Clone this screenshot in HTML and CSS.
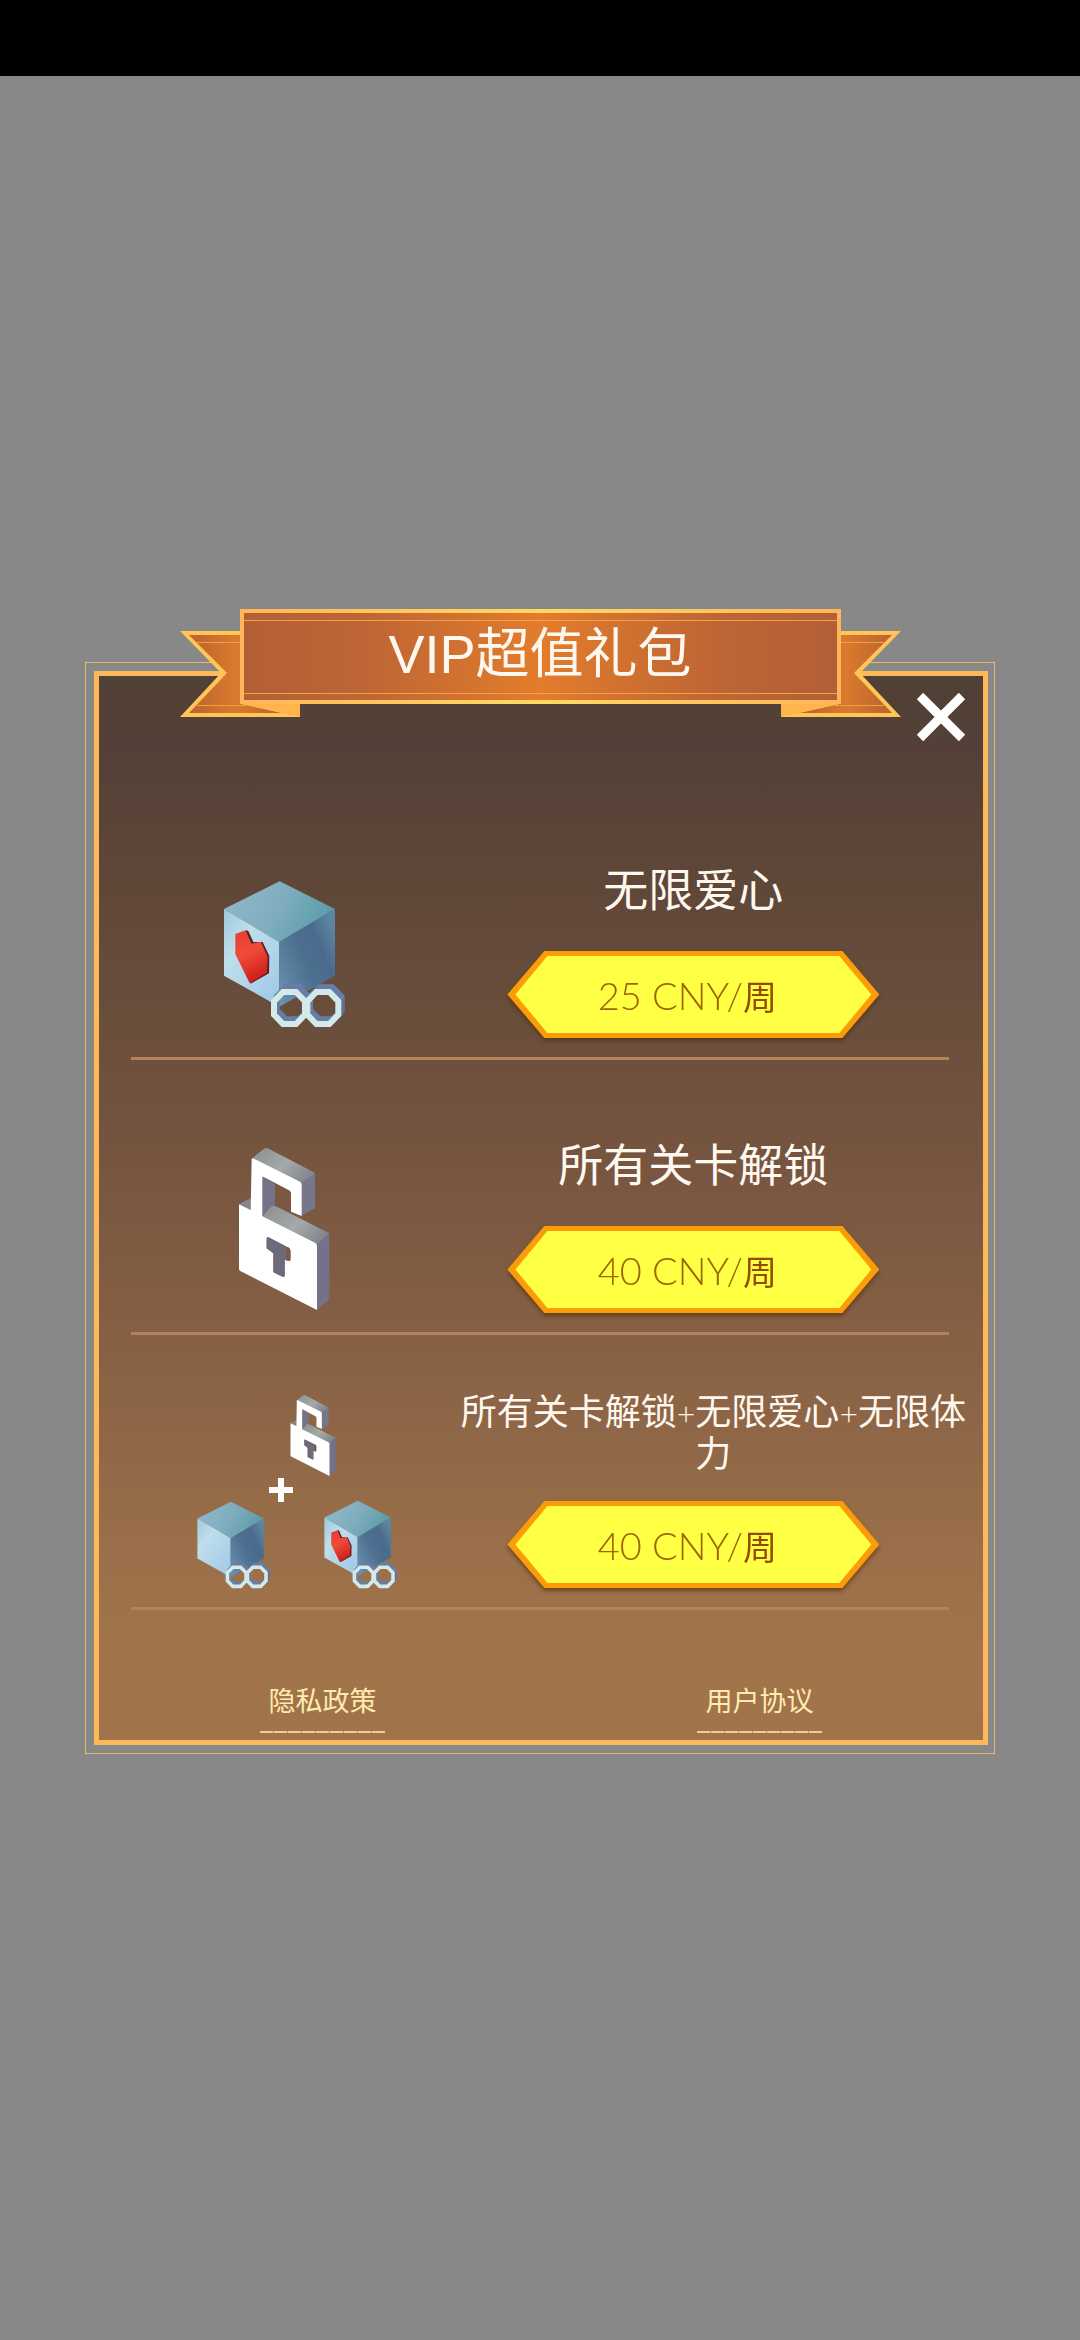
FILE: index.html
```html
<!DOCTYPE html>
<html lang="zh-CN">
<head>
  <meta charset="UTF-8" />
  <meta name="viewport" content="width=device-width, initial-scale=1.0" />
  <title>VIP超值礼包</title>
  <link rel="stylesheet" href="styles.css">
</head>
<body>
  <svg class="sprite" width="0" height="0" aria-hidden="true">
    <defs>
      <linearGradient id="cubeTop" x1="0" y1="0.3" x2="1" y2="0.6">
        <stop offset="0" stop-color="#8fb8cb"/><stop offset="0.5" stop-color="#7fadbd"/><stop offset="1" stop-color="#569aa6"/>
      </linearGradient>
      <linearGradient id="cubeLeft" x1="0" y1="0" x2="0.8" y2="1">
        <stop offset="0" stop-color="#9cc9dc"/><stop offset="0.35" stop-color="#bfdeea"/><stop offset="1" stop-color="#a2cbe8"/>
      </linearGradient>
      <linearGradient id="cubeRight" x1="0" y1="1" x2="1" y2="0.2">
        <stop offset="0" stop-color="#6e95b3"/><stop offset="0.5" stop-color="#4c7090"/><stop offset="0.75" stop-color="#4a6a8d"/><stop offset="1" stop-color="#5c87a2"/>
      </linearGradient>
      <linearGradient id="heartRed" x1="0" y1="0" x2="0.3" y2="1">
        <stop offset="0" stop-color="#e5402f"/><stop offset="0.5" stop-color="#f04a39"/><stop offset="1" stop-color="#cf211d"/>
      </linearGradient>
      <linearGradient id="lockTop" x1="0" y1="0" x2="1" y2="0.6">
        <stop offset="0" stop-color="#8b8f91"/><stop offset="0.6" stop-color="#a4a9aa"/><stop offset="1" stop-color="#85878e"/>
      </linearGradient>
      <linearGradient id="ribbonFill">
        <stop offset="0" stop-color="#b35f36"/><stop offset="0.2" stop-color="#bd6534"/><stop offset="0.5" stop-color="#e37c2c"/><stop offset="0.8" stop-color="#bd6534"/><stop offset="1" stop-color="#b35f36"/>
      </linearGradient>
      <linearGradient id="ribbonGold">
        <stop offset="0" stop-color="#ffb55a"/><stop offset="0.5" stop-color="#ffd964"/><stop offset="1" stop-color="#ffb55a"/>
      </linearGradient>
      <linearGradient id="tailFill">
        <stop offset="0" stop-color="#bb6331"/><stop offset="0.5" stop-color="#da7a2c"/><stop offset="1" stop-color="#b8632f"/>
      </linearGradient>

      <symbol id="cube" viewBox="0 0 510 570">
        <path fill="url(#cubeTop)" d="M239 64 405 147 238 246 72 147z"/>
        <path fill="url(#cubeLeft)" d="M72 147 238 246V440L72 347z"/>
        <path fill="url(#cubeRight)" d="M238 246 405 147V347L238 440z"/>
      </symbol>
      <symbol id="heart" viewBox="0 0 510 570">
        <path fill="#5b1d27" d="M137 210 145 213 160 246 188 246 208 288 207 340 152 371z"/>
        <path fill="url(#heartRed)" d="M106 222 137 211 154 251 182 245 203 290 201 338 149 370 106 282z"/>
      </symbol>
      <symbol id="infinity" viewBox="0 0 510 570">
        <g fill="none" stroke-width="18">
          <path stroke="#667ea6" d="M325 410V450L297 478H258L230 450V410L258 382H297zM425 410V450L397 478H358L330 450V410L358 382H397z"/>
          <path stroke="#5a7099" d="M422 418V458L396 484"/>
          <path stroke="#d3e9ea" d="M315 424V464L288 492H249L222 464V424L249 396H288zM415 424V464L388 492H349L322 464V424L349 396H388z"/>
        </g>
      </symbol>
      <symbol id="lock" viewBox="0 0 390 600">
        <path fill="#85858d" d="M57 223 92 204V240z"/>
        <path fill="url(#lockTop)" d="M95 86 132 56Q138 52 146 56L280 126Q286 129 285 136L243 160z"/>
        <path fill="#77778b" d="M243 160 285 130V235L243 258z"/>
        <path fill="#73738a" d="M127 140 165 162V225L127 262z"/>
        <path fill="url(#lockTop)" d="M127 260 155 229Q160 225 168 229L328 310 290 345z"/>
        <path fill="#73728a" d="M290 345 328 310V508L290 540z"/>
        <path fill="#fff" fill-rule="evenodd" d="M95 86Q97 83 101 86L240 155Q245 158 245 163V258L213 245V190Q213 184 207 181L131 141Q127 139 127 144V259L285 338Q291 341 291 348V540L61 423Q57 421 57 416V223L92 240zM140 326V355L160 370V422Q160 427 165 429L188 440Q194 442 194 436V389L206 393Q211 394 211 389V362Q211 356 206 353L145 322Q140 320 140 326z"/>
        <path fill="#6d6a7c" d="M140 326Q140 320 145 322L206 353Q211 356 211 362V389Q211 394 206 393L194 389V436Q194 442 188 440L165 429Q160 427 160 422V370L140 355z"/>
        <path fill="#87573b" d="M199 351 206 353Q211 356 211 362V389Q211 394 206 393L199 382z"/>
      </symbol>
    </defs>
  </svg>

  <div class="status-bar"></div>

  <main class="screen">
    <section class="dialog" aria-labelledby="dialogTitle">
      <header class="ribbon">
        <svg class="ribbon-art" viewBox="0 0 721 109" aria-hidden="true">
          <g id="tail">
            <path fill="#ffc657" d="M0 22H62V95H120V108H0L41 64z"/>
            <path fill="url(#tailFill)" d="M9 26H62V95L102 104H9L47 64z"/>
            <path stroke="#f0a044" d="M17 33.5H60M17 96.5H66"/>
            <path fill="#ffb54c" d="M62 95H120V108L102 104z"/>
          </g>
          <use href="#tail" transform="matrix(-1 0 0 1 721 0)"/>
          <rect x="60" width="601" height="95" fill="url(#ribbonGold)"/>
          <rect x="64" y="4" width="593" height="87" fill="url(#ribbonFill)"/>
          <path stroke="#f6a044" d="M64 11.500H657M64 84.500H657"/>
        </svg>
        <h1 id="dialogTitle">VIP超值礼包</h1>
      </header>

      <button class="close" type="button" aria-label="关闭">
        <svg viewBox="0 0 50 50"><path d="M4 4 46 46M46 4 4 46" stroke="#fff" stroke-width="9"/></svg>
      </button>

      <div class="panel">
        <ul class="offers">
          <li class="offer">
            <svg class="offer-icon" viewBox="0 0 240 220" aria-hidden="true">
              <use href="#cube" x="36" y="30" width="170" height="190"/>
              <use href="#heart" x="36" y="30" width="170" height="190"/>
              <use href="#infinity" x="36" y="30" width="170" height="190"/>
            </svg>
            <div class="offer-info">
              <h2 class="offer-name">无限爱心</h2>
              <button class="buy" type="button"><span class="buy-edge"><span class="buy-face">25 CNY/<b>周</b></span></span></button>
            </div>
          </li>
          <li class="offer">
            <svg class="offer-icon" viewBox="0 0 240 220" aria-hidden="true">
              <use href="#lock" x="56" y="25" width="130" height="200"/>
            </svg>
            <div class="offer-info">
              <h2 class="offer-name">所有关卡解锁</h2>
              <button class="buy" type="button"><span class="buy-edge"><span class="buy-face">40 CNY/<b>周</b></span></span></button>
            </div>
          </li>
          <li class="offer">
            <svg class="offer-icon" viewBox="0 0 240 220" aria-hidden="true">
              <use href="#lock" x="117" y="6" width="65" height="100"/>
              <path d="M105 110H129M117 98V122" stroke="#fff" stroke-width="6"/>
              <use href="#cube" x="19" y="109" width="102" height="114"/>
              <use href="#infinity" x="19" y="108" width="102" height="114"/>
              <use href="#cube" x="146" y="108" width="102" height="114"/>
              <use href="#heart" x="146" y="108" width="102" height="114"/>
              <use href="#infinity" x="146" y="108" width="102" height="114"/>
            </svg>
            <div class="offer-info">
              <h2 class="offer-name bundle">所有关卡解锁<i>+</i>无限爱心<i>+</i>无限体<wbr>力</h2>
              <button class="buy" type="button"><span class="buy-edge"><span class="buy-face">40 CNY/<b>周</b></span></span></button>
            </div>
          </li>
        </ul>
        <footer class="links">
          <a href="#privacy">隐私政策</a>
          <a href="#terms">用户协议</a>
        </footer>
      </div>
    </section>
  </main>
</body>
</html>
```
FILE: styles.css
```css
* {
  box-sizing: border-box;
}

body {
  margin: 0;
  min-height: 100vh;
  display: flex;
  flex-direction: column;
  background: #888;
  color: #fff8f0;
  font-family: "Liberation Sans", "Noto Sans CJK SC", sans-serif;
}

.sprite {
  position: absolute;
}

.status-bar {
  height: 76px;
  background: #000;
}

.screen {
  flex: 1;
  display: flex;
  align-items: center;
  padding: 0 85px;
}

.dialog {
  position: relative;
  flex: 1;
  padding: 8px 6px 8px 8px;
  border: 1px solid #e9b96c;
}

.panel {
  border: 5px solid #fdb85a;
  background: linear-gradient(#514036 0%, #544038 7%, #5e4638 18%, #674d3b 30%, #75543f 44%, #805c42 56%, #8d6546 69%, #9a6f49 82%, #a1744b 92%, #a0734a 100%);
}

/* title ribbon sits over the top edge of the panel */
.ribbon {
  position: absolute;
  z-index: 1;
  top: -54px;
  left: 0;
  right: 0;
  display: grid;
  justify-items: center;
}

.ribbon-art,
.ribbon h1 {
  grid-area: 1 / 1;
}

.ribbon-art {
  width: 721px;
  max-width: 100%;
}

.ribbon h1 {
  margin: 0;
  font-size: 54px;
  font-weight: normal;
  line-height: 90px;
}

.close {
  position: absolute;
  z-index: 2;
  top: 29px;
  right: 28px;
  width: 50px;
  height: 50px;
  padding: 0;
  border: 0;
  background: none;
  cursor: pointer;
}

.close svg {
  display: block;
}

.offers {
  list-style: none;
  margin: 0 34px 0 32px;
  padding: 109px 0 0;
}

.offer {
  display: grid;
  grid-template-columns: 3fr 5fr;
  padding: 45px 0 7px;
  border-bottom: 3px solid #b78257;
}

.offer-icon {
  width: 240px;
  height: 220px;
  justify-self: center;
}

.offer-name {
  height: 121px;
  margin: 0;
  font-size: 45px;
  font-weight: normal;
  line-height: 124px;
  text-align: center;
}

.offer-name.bundle {
  margin: 0 -20px 0 20px;
  padding-top: 12px;
  font-size: 36px;
  line-height: 42px;
}

.offer-name i {
  font: 300 32px/1 Lato, sans-serif;
}

.buy {
  display: block;
  width: 372px;
  margin: 0 auto;
  padding: 0;
  border: 0;
  background: none;
  filter: drop-shadow(0 3px 2px rgba(80, 40, 10, 0.6));
  cursor: pointer;
}

.buy-edge {
  display: block;
  padding: 5px 8px;
  background: #fb9d08;
  clip-path: polygon(37px 0, calc(100% - 37px) 0, 100% 50%, calc(100% - 37px) 100%, 37px 100%, 0 50%);
}

.buy-face {
  display: block;
  height: 77px;
  padding: 1px 12px 0 0;
  background: #ffff43;
  clip-path: polygon(32px 0, calc(100% - 32px) 0, 100% 50%, calc(100% - 32px) 100%, 32px 100%, 0 50%);
  color: #9c6600;
  font: 300 38px/77px Lato, "Noto Sans CJK SC", sans-serif;
}

.buy-face b {
  color: #944a00;
  font-size: 34px;
  font-weight: 400;
}

.links {
  display: flex;
  padding: 72px 5px 7px;
}

.links a {
  flex: 1;
  color: #ffebae;
  font-size: 27px;
  line-height: 40px;
  text-align: center;
  text-decoration: none;
}

.links a::after {
  content: "";
  display: block;
  width: 125px;
  height: 2px;
  margin: 9px auto 0;
  background: repeating-linear-gradient(90deg, #f2cb92 0 13px, #c0925f 13px 14px);
}
```
